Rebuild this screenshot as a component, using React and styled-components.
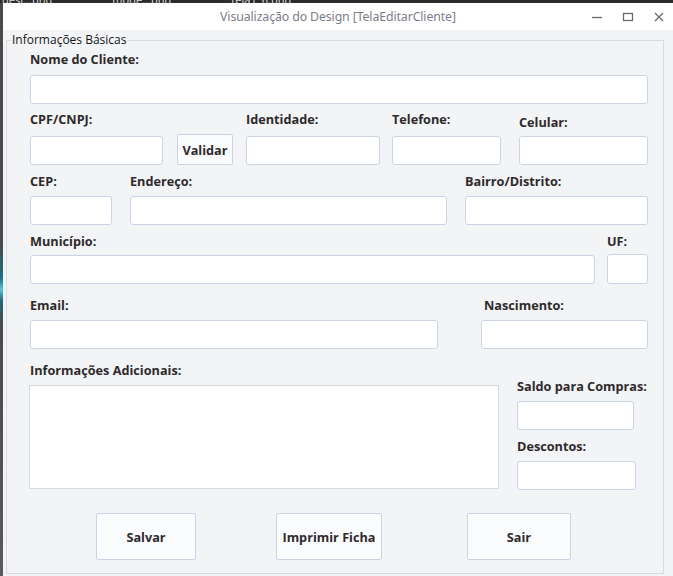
import React from "react";
import styled, { createGlobalStyle } from "styled-components";

const Global = createGlobalStyle`
  html, body { margin: 0; padding: 0; }
  body { background: #2c2c2c; overflow: hidden; font-family: "Open Sans", "Noto Sans", sans-serif; }
  * { box-sizing: border-box; }
`;

const Desktop = styled.div`
  width: 673px;
  height: 576px;
  display: flex;
  flex-direction: column;
  background: #2c2c2c;
`;

const TopStrip = styled.div`
  height: 3px;
  overflow: hidden;
  display: flex;
  gap: 60px;
  padding-left: 2px;
  align-items: flex-end;
  font-family: "Noto Sans", sans-serif;
  font-size: 11px;
  line-height: 11px;
  color: #d8d8d8;
`;

const StripText = styled.span`
  margin-bottom: -2px;
  white-space: nowrap;
`;

const Main = styled.div`
  flex: 1;
  display: flex;
`;

const LeftEdge = styled.div`
  width: 3px;
  background: linear-gradient(
    to bottom,
    #4a4a4a 0%,
    #4a4a4a 42%,
    #1f6f80 48%,
    #5cc2d6 50%,
    #2a6474 52%,
    #4a4a4a 56%,
    #5a5a5a 100%
  );
`;

const Window = styled.div`
  flex: 1;
  display: flex;
  flex-direction: column;
  background: #f3f4f6;
`;

const TitleBar = styled.div`
  height: 27px;
  background: #ffffff;
  display: flex;
  align-items: center;
  justify-content: center;
  position: relative;
`;

const Title = styled.div`
  font-family: "Noto Sans", sans-serif;
  font-size: 12.3px;
  color: #7c7c88;
  letter-spacing: -0.1px;
`;

const Controls = styled.div`
  position: absolute;
  right: 6px;
  top: 0;
  height: 27px;
  display: flex;
  align-items: center;
  gap: 15px;
`;

const CtrlIcon = styled.svg`
  width: 16px;
  height: 16px;
  display: block;
`;

const Body = styled.div`
  flex: 1;
  display: flex;
  padding: 3px 9px 2px 3px;
`;

const Group = styled.fieldset`
  flex: 1;
  margin: 0;
  padding: 0;
  min-width: 0;
  border: 1px solid #dadbde;
`;

const Legend = styled.legend`
  margin-left: 4px;
  padding: 0 1px;
  font-family: "Open Sans", sans-serif;
  font-size: 12px;
  line-height: 14px;
  color: #161616;
`;

const Form = styled.div`
  display: flex;
  flex-direction: column;
  padding: 4px 14px 0 23px;
`;

const Row = styled.div`
  display: flex;
  align-items: ${(p) => p.$align || "flex-end"};
  margin-top: ${(p) => p.$mt || 0}px;
`;

const Field = styled.div`
  display: flex;
  flex-direction: column;
  gap: ${(p) => (p.$gap != null ? p.$gap : 7)}px;
  width: ${(p) => (p.$w ? `${p.$w}px` : "auto")};
  flex: ${(p) => (p.$w ? "none" : "1")};
  margin-left: ${(p) => p.$ml || 0}px;
  margin-top: ${(p) => p.$mt || 0}px;
`;

const Label = styled.label`
  font-family: "Open Sans", sans-serif;
  font-weight: 700;
  font-size: 12.7px;
  line-height: 16px;
  color: #2e2a2c;
  white-space: nowrap;
  padding-left: ${(p) => p.$indent || 0}px;
`;

const Input = styled.div`
  height: ${(p) => p.$h || 29}px;
  background: #ffffff;
  border: 1px solid #cbd3e6;
  border-radius: 3px;
`;

const TextArea = styled.div`
  width: 470px;
  height: 104px;
  background: #ffffff;
  border: 1px solid #d8d9dc;
  margin-left: -1px;
`;

const SmallButton = styled.div`
  width: ${(p) => p.$w}px;
  height: ${(p) => p.$h}px;
  margin-left: ${(p) => p.$ml || 0}px;
  display: flex;
  align-items: center;
  justify-content: center;
  background: #fafbfc;
  border: 1px solid #cbd3e6;
  border-radius: 2px;
  font-family: "Open Sans", sans-serif;
  font-weight: 700;
  font-size: 12.7px;
  color: #2e2a2c;
`;

const SideColumn = styled.div`
  display: flex;
  flex-direction: column;
  margin-left: 17px;
  padding-top: 16px;
`;

const ButtonRow = styled.div`
  display: flex;
  margin-top: 23px;
`;

function MinIcon() {
  return (
    <CtrlIcon viewBox="0 0 16 16">
      <path d="M3 8.5h10" stroke="#6a6a6a" strokeWidth="1.3" fill="none" />
    </CtrlIcon>
  );
}
function MaxIcon() {
  return (
    <CtrlIcon viewBox="0 0 16 16">
      <rect x="3.5" y="4.5" width="9" height="7" stroke="#6a6a6a" strokeWidth="1.3" fill="none" />
    </CtrlIcon>
  );
}
function CloseIcon() {
  return (
    <CtrlIcon viewBox="0 0 16 16">
      <path d="M4 4l8 8M12 4l-8 8" stroke="#6a6a6a" strokeWidth="1.3" fill="none" />
    </CtrlIcon>
  );
}

export default function App() {
  return (
    <>
      <Global />
      <Desktop>
        <TopStrip>
          <StripText>desi...png</StripText>
          <StripText>mode...png</StripText>
          <StripText>tela1_6.png</StripText>
        </TopStrip>
        <Main>
          <LeftEdge />
          <Window>
            <TitleBar>
              <Title>Visualização do Design [TelaEditarCliente]</Title>
              <Controls>
                <MinIcon />
                <MaxIcon />
                <CloseIcon />
              </Controls>
            </TitleBar>
            <Body>
              <Group>
                <Legend>Informações Básicas</Legend>
                <Form>
                  <Row>
                    <Field $gap={8} $w={618}>
                      <Label>Nome do Cliente:</Label>
                      <Input />
                    </Field>
                  </Row>

                  <Row $mt={7}>
                    <Field $gap={9} $w={133}>
                      <Label>CPF/CNPJ:</Label>
                      <Input />
                    </Field>
                    <SmallButton $w={56} $h={31} $ml={14}>Validar</SmallButton>
                    <Field $gap={9} $w={134} $ml={13}>
                      <Label>Identidade:</Label>
                      <Input />
                    </Field>
                    <Field $gap={9} $w={109} $ml={12}>
                      <Label>Telefone:</Label>
                      <Input />
                    </Field>
                    <Field $gap={6} $w={129} $ml={18}>
                      <Label>Celular:</Label>
                      <Input />
                    </Field>
                  </Row>

                  <Row $mt={8}>
                    <Field $w={82}>
                      <Label>CEP:</Label>
                      <Input />
                    </Field>
                    <Field $w={317} $ml={18}>
                      <Label>Endereço:</Label>
                      <Input />
                    </Field>
                    <Field $w={183} $ml={18}>
                      <Label>Bairro/Distrito:</Label>
                      <Input />
                    </Field>
                  </Row>

                  <Row $mt={8}>
                    <Field $gap={6} $w={565}>
                      <Label>Município:</Label>
                      <Input />
                    </Field>
                    <Field $gap={5} $w={41} $ml={12}>
                      <Label>UF:</Label>
                      <Input $h={30} />
                    </Field>
                  </Row>

                  <Row $mt={13}>
                    <Field $w={408}>
                      <Label>Email:</Label>
                      <Input />
                    </Field>
                    <Field $w={167} $ml={43}>
                      <Label $indent={3}>Nascimento:</Label>
                      <Input />
                    </Field>
                  </Row>

                  <Row $mt={13} $align="flex-start">
                    <Field $w={470}>
                      <Label>Informações Adicionais:</Label>
                      <TextArea />
                    </Field>
                    <SideColumn>
                      <Field $w={117}>
                        <Label>Saldo para Compras:</Label>
                        <Input />
                      </Field>
                      <Field $w={119} $mt={8}>
                        <Label>Descontos:</Label>
                        <Input />
                      </Field>
                    </SideColumn>
                  </Row>

                  <ButtonRow>
                    <SmallButton $w={100} $h={47} $ml={66}>Salvar</SmallButton>
                    <SmallButton $w={106} $h={47} $ml={80}>Imprimir Ficha</SmallButton>
                    <SmallButton $w={104} $h={47} $ml={85}>Sair</SmallButton>
                  </ButtonRow>
                </Form>
              </Group>
            </Body>
          </Window>
        </Main>
      </Desktop>
    </>
  );
}
